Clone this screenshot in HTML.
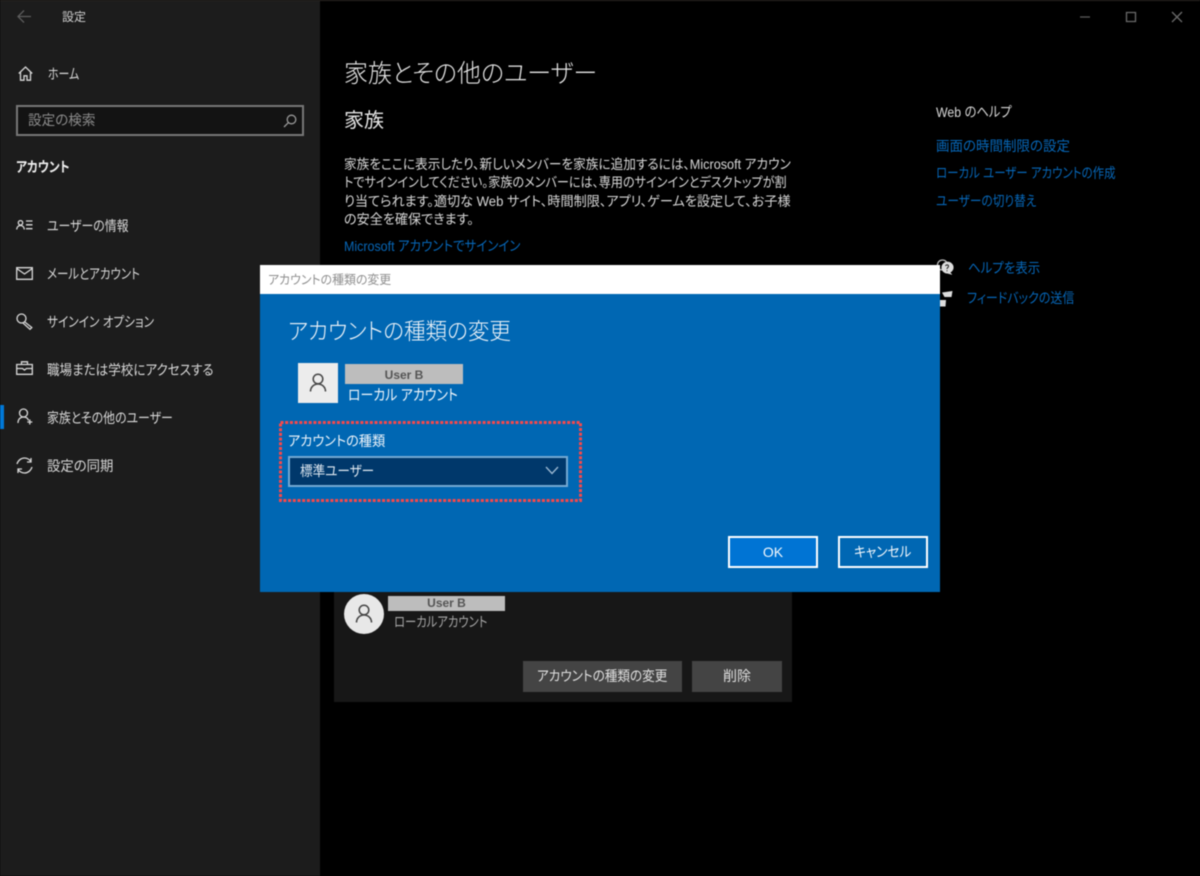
<!DOCTYPE html>
<html lang="ja"><head><meta charset="utf-8"><title>設定</title>
<style>
html,body{margin:0;padding:0;background:#000;}
#p{position:relative;width:1200px;height:876px;overflow:hidden;background:#000;font-family:"Liberation Sans","Noto Sans CJK JP",sans-serif;font-feature-settings:"palt";filter:blur(.45px);}
#p div,#p svg{position:absolute;}
.t{white-space:nowrap;line-height:20px;height:20px;font-size:14px;color:#d8d8d8;transform-origin:0 50%;}
.b{color:#0767b8;}
svg{fill:none;stroke:#d8d8d8;stroke-width:1.3;}
</style></head><body><div id="p">
<div style="left:0;top:0;width:1200px;height:1px;background:#2b2622"></div>
<div style="left:0;top:1px;width:320px;height:875px;background:#1c1c1c"></div>

<svg style="left:17px;top:9px" width="16" height="16" viewBox="0 0 16 16"><path d="M1 7.500H14M7 1.500L1 7.500L7 13.500" style="stroke:#5c5c5c"/></svg>
<div class="t" style="left:62px;top:7px;font-size:12px;color:#d0d0d0">設定</div>
<svg style="left:18px;top:66px" width="15" height="15" viewBox="0 0 15 15"><path d="M.8 7.500L7.500 1L14.200 7.500M2.500 6V14.200H6V9.800H9V14.200H12.500V6"/></svg>
<div class="t" style="left:48px;top:64px;transform:scaleX(.78)">ホーム</div>
<div style="left:16px;top:105px;width:284px;height:27px;border:2px solid #777;background:#131313"></div>
<div class="t" style="left:28px;top:110px;color:#8c8c8c;transform:scaleX(.97)">設定の検索</div>
<svg style="left:283px;top:114px" width="14" height="14" viewBox="0 0 14 14"><circle cx="8.500" cy="5.500" r="4.300" style="stroke:#999"/><path d="M5.400 8.600L1 13" style="stroke:#999"/></svg>
<div class="t" style="left:16px;top:157px;font-weight:700;color:#f0f0f0;transform:scaleX(.84)">アカウント</div>

<svg style="left:16px;top:220px" width="17" height="10" viewBox="0 0 17 10"><circle cx="4.500" cy="2.800" r="2.200"/><path d="M.7 9.500C.7 7 2.500 5.500 4.500 5.500S8.300 7 8.300 9.500M10 1H16.500M10 4.800H16.500M10 8.700H16.500"/></svg>
<div class="t" style="left:47px;top:216px;transform:scaleX(.85)">ユーザーの情報</div>
<svg style="left:16px;top:267px" width="17" height="13" viewBox="0 0 17 13"><path d="M.7.700H16.300V12.300H.7ZM.7 1.500L8.500 7L16.300 1.500"/></svg>
<div class="t" style="left:47px;top:264px;transform:scaleX(.82)">メールとアカウント</div>
<svg style="left:16px;top:313px" width="17" height="17" viewBox="0 0 17 17"><circle cx="5.500" cy="5.500" r="4.500"/><path d="M8.500 8.800L15.800 14.500L14 16.300L7 10"/></svg>
<div class="t" style="left:47px;top:312px;transform:scaleX(.835)">サインイン オプション</div>
<svg style="left:16px;top:361px" width="17" height="14" viewBox="0 0 17 14"><path d="M.7 3.500H16.300V13.300H.7ZM5.500 3.500V.8H11.500V3.500M.7 7.500H6.500L8.500 9L10.500 7.500H16.300"/></svg>
<div class="t" style="left:47px;top:360px;transform:scaleX(.897)">職場または学校にアクセスする</div>
<div style="left:0;top:405px;width:4px;height:24px;background:#0078d7"></div>
<svg style="left:17px;top:408px" width="16" height="17" viewBox="0 0 16 17"><circle cx="6.500" cy="5" r="4"/><path d="M1 15C1 11 3.500 9 6.500 9S11 10.500 11.500 12.500M12.800 11.500V16.500M10.300 14H15.300"/></svg>
<div class="t" style="left:47px;top:408px;transform:scaleX(.85)">家族とその他のユーザー</div>
<svg style="left:16px;top:457px" width="17" height="17" viewBox="0 0 17 17"><path d="M1 7C2 3.500 5 1 8.500 1C11.500 1 13.500 2.500 15 4.500M15 1V5H11M16 10C15 13.500 12 16 8.500 16C5.500 16 3.500 14.500 2 12.500M2 16V12H6"/></svg>
<div class="t" style="left:47px;top:456px;transform:scaleX(.956)">設定の同期</div>

<div class="t" style="left:344px;top:59px;font-size:25px;line-height:30px;height:30px;color:#e6e6e6;font-weight:300;transform:scaleX(.958)">家族とその他のユーザー</div>
<div class="t" style="left:344px;top:108px;font-size:20px;line-height:26px;height:26px;color:#e6e6e6">家族</div>
<div class="t" style="left:344px;top:155px;font-size:13.500px;transform:scaleX(.937)">家族をここに表示したり、新しいメンバーを家族に追加するには、Microsoft アカウン</div>
<div class="t" style="left:344px;top:173px;font-size:13.500px;transform:scaleX(.897)">トでサインインしてください。家族のメンバーには、専用のサインインとデスクトップが割</div>
<div class="t" style="left:344px;top:192px;font-size:13.500px;transform:scaleX(.972)">り当てられます。適切な Web サイト、時間制限、アプリ、ゲームを設定して、お子様</div>
<div class="t" style="left:344px;top:210px;font-size:13.500px;transform:scaleX(.97)">の安全を確保できます。</div>
<div class="t b" style="left:344px;top:236px;transform:scaleX(.89)">Microsoft アカウントでサインイン</div>

<div class="t" style="left:936px;top:102px;transform:scaleX(.88)">Web のヘルプ</div>
<div class="t b" style="left:936px;top:136px;transform:scaleX(.964)">画面の時間制限の設定</div>
<div class="t b" style="left:936px;top:163px;transform:scaleX(.82)">ローカル ユーザー アカウントの作成</div>
<div class="t b" style="left:936px;top:191px;transform:scaleX(.835)">ユーザーの切り替え</div>
<div class="t b" style="left:968px;top:258px;transform:scaleX(.89)">ヘルプを表示</div>
<div class="t b" style="left:967px;top:288px;transform:scaleX(.856)">フィードバックの送信</div>
<svg style="left:935px;top:259px" width="19" height="18" viewBox="0 0 19 18"><circle cx="7.500" cy="6" r="5" style="stroke:#bbb"/><path d="M12 3A5.500 5.500 0 0 1 15 13.500L17 15.500L12.500 14.300A5.500 5.500 0 0 1 12 3Z" style="fill:#ddd;stroke:#ddd;stroke-width:.5"/><path d="M10.500 7C11 5.500 13.500 5.500 13.500 7.200C13.500 8.500 12 8.500 12 10M12 11.300V12.300" style="stroke:#222;stroke-width:1"/></svg>
<svg style="left:938px;top:290px" width="16" height="18" viewBox="0 0 16 18"><path d="M4 2.500L14.500 1L13.500 7H6.500ZM2 10H8L7.500 16.500H2Z" style="fill:#ddd;stroke:none"/></svg>

<svg style="left:1079px;top:11px" width="12" height="12" viewBox="0 0 12 12"><path d="M1 6H11" style="stroke:#5a5a5a"/></svg>
<svg style="left:1125px;top:11px" width="12" height="12" viewBox="0 0 12 12"><path d="M1.500 1.500H10.500V10.500H1.500Z" style="stroke:#6a6a6a"/></svg>
<svg style="left:1171px;top:11px" width="12" height="12" viewBox="0 0 12 12"><path d="M1 1L11 11M11 1L1 11" style="stroke:#6a6a6a"/></svg>

<div style="left:334px;top:590px;width:458px;height:112px;background:#171717"></div>
<div style="left:344px;top:594px;width:40px;height:40px;border-radius:50%;background:#e8e8e8"></div>
<svg style="left:355px;top:604px" width="18" height="20" viewBox="0 0 18 20"><circle cx="9" cy="6" r="4.800" style="stroke:#444;stroke-width:1.500"/><path d="M1.500 18.500C1.500 14 5 11 9 11S16.500 14 16.500 18.500" style="stroke:#444;stroke-width:1.500"/></svg>
<div style="left:388px;top:596px;width:117px;height:15px;background:#bdbdbd"></div>
<div class="t" style="left:388px;top:596px;width:117px;height:15px;line-height:15px;text-align:center;font-size:12px;font-weight:700;color:#555">User B</div>
<div class="t" style="left:394px;top:612px;color:#a8a8a8;transform:scaleX(.81)">ローカルアカウント</div>
<div style="left:523px;top:661px;width:159px;height:31px;background:#444"></div>
<div class="t" style="left:537px;top:666px;color:#e0e0e0;transform:scaleX(.9)">アカウントの種類の変更</div>
<div class="t" style="left:692px;top:661px;width:90px;height:31px;line-height:31px;background:#444;text-align:center;color:#e0e0e0">削除</div>

<div style="left:260px;top:265px;width:680px;height:29px;background:#fff"></div>
<div class="t" style="left:268px;top:270px;font-size:12.500px;color:#8e8e8e;transform:scaleX(.953)">アカウントの種類の変更</div>
<div style="left:260px;top:294px;width:680px;height:298px;background:#0067b3"></div>
<div class="t" style="left:288px;top:315px;font-size:23px;line-height:32px;height:32px;color:#f2f6fa;font-weight:300;transform:scaleX(.937)">アカウントの種類の変更</div>
<div style="left:298px;top:363px;width:40px;height:40px;background:#ececec"></div>
<svg style="left:309px;top:373px" width="18" height="20" viewBox="0 0 18 20"><circle cx="9" cy="6" r="4.800" style="stroke:#444;stroke-width:1.500"/><path d="M1.500 18.500C1.500 14 5 11 9 11S16.500 14 16.500 18.500" style="stroke:#444;stroke-width:1.500"/></svg>
<div style="left:345px;top:364px;width:118px;height:20px;background:#bdbdbd"></div>
<div class="t" style="left:345px;top:365px;width:118px;text-align:center;font-size:12px;font-weight:700;color:#555">User B</div>
<div class="t" style="left:348px;top:386px;font-size:15px;color:#f0f6fb;transform:scaleX(.86)">ローカル アカウント</div>
<svg style="left:278px;top:420px" width="306" height="84" viewBox="0 0 306 84"><rect x="2.500" y="2.500" width="300" height="78" style="stroke:#f8484a;stroke-width:3;stroke-dasharray:3 1.700"/></svg>
<div class="t" style="left:288px;top:431px;color:#eef4fa;transform:scaleX(.94)">アカウントの種類</div>
<div style="left:288px;top:456px;width:276px;height:27px;border:2px solid #75a9d3;background:#00386b"></div>
<div class="t" style="left:300px;top:461px;color:#dfe8f0;transform:scaleX(.9)">標準ユーザー</div>
<svg style="left:545px;top:466px" width="14" height="9" viewBox="0 0 14 9"><path d="M1 1L7 7.500L13 1" style="stroke:#9db9d2"/></svg>
<div class="t" style="left:728px;top:536px;width:86px;height:28px;line-height:28px;border:2px solid #fff;background:#0074d4;text-align:center;color:#f4f8fc">OK</div>
<div style="left:838px;top:536px;width:86px;height:28px;border:2px solid #fff;background:#0067b3"></div>
<div class="t" style="left:854px;top:542px;color:#f4f8fc;transform:scaleX(.905)">キャンセル</div>
</div></body></html>
